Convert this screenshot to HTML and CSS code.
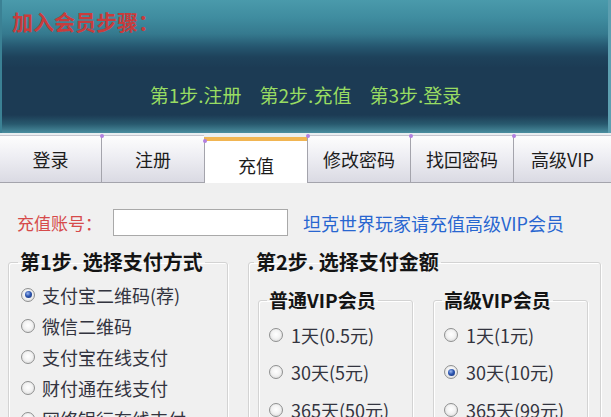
FILE: index.html
```html
<!DOCTYPE html>
<html lang="zh-CN">
<head>
<meta charset="utf-8">
<title>加入会员步骤</title>
<link rel="stylesheet" href="styles.css">
</head>
<body>
<div class="banner">
  <div class="title">加入会员步骤：</div>
  <div class="steps"><span>第1步.注册</span><span>第2步.充值</span><span>第3步.登录</span></div>
</div>
<div class="tabs">
  <div class="tab w1">登录</div>
  <div class="tab w2">注册</div>
  <div class="tab w3 active">充值</div>
  <div class="tab w4">修改密码</div>
  <div class="tab w5">找回密码</div>
  <div class="tab w6">高级VIP</div>
</div>
<div class="content">
  <div class="account">
    <span class="label">充值账号：</span>
    <span class="input"></span>
    <a class="link" href="#">坦克世界玩家请充值高级VIP会员</a>
  </div>
  <div class="groups">
    <fieldset class="box box-pay">
      <legend class="lg-pay">第1步. 选择支付方式</legend>
      <ul class="opts">
        <li><span class="radio on"><span class="dot"></span></span>支付宝二维码(荐)</li>
        <li><span class="radio"></span>微信二维码</li>
        <li><span class="radio"></span>支付宝在线支付</li>
        <li><span class="radio"></span>财付通在线支付</li>
        <li><span class="radio"></span>网络银行在线支付</li>
      </ul>
    </fieldset>
    <fieldset class="box box-amount">
      <legend class="lg-amount">第2步. 选择支付金额</legend>
      <div class="tiers">
        <fieldset class="box tier">
          <legend class="lg-tier">普通VIP会员</legend>
          <ul class="opts tier-opts">
            <li><span class="radio"></span>1天(0.5元)</li>
            <li><span class="radio"></span>30天(5元)</li>
            <li><span class="radio"></span>365天(50元)</li>
          </ul>
        </fieldset>
        <fieldset class="box tier">
          <legend class="lg-tier">高级VIP会员</legend>
          <ul class="opts tier-opts">
            <li><span class="radio"></span>1天(1元)</li>
            <li><span class="radio on"><span class="dot"></span></span>30天(10元)</li>
            <li><span class="radio"></span>365天(99元)</li>
          </ul>
        </fieldset>
      </div>
    </fieldset>
  </div>
</div>
</body>
</html>
```

FILE: styles.css
```css
html, body {
  margin: 0;
  padding: 0;
}
body {
  width: 611px;
  height: 417px;
  overflow: hidden;
  background: #f0f0f0;
  font-family: "Noto Sans CJK SC", "Noto Sans", sans-serif;
}

/* banner */
.banner {
  height: 133px;
  box-sizing: border-box;
  padding-top: 6px;
  background: linear-gradient(180deg,
    #4a9aab 0px, #3f8c9f 18px, #35798e 34px, #25566f 47px,
    #1e425b 57px, #1c3b54 68px, #1c3b54 115px, #28596e 124px, #4a8e9f 133px);
  box-shadow: inset -3px 0 0 #5d9fb0, inset 2px 0 0 #3b8194;
}
.title {
  padding-left: 12px;
  font-size: 21px;
  font-weight: 700;
  line-height: 30px;
  color: #c83c3c;
}
.steps {
  display: flex;
  justify-content: center;
  gap: 18px;
  margin-top: 47px;
  font-size: 19px;
  line-height: 24px;
  color: #98dc62;
}

/* tabs */
.tabs {
  display: flex;
  height: 50px;
  box-sizing: border-box;
  padding-top: 2px;
  background: #e9eef0;
}
.tab {
  position: relative;
  box-sizing: border-box;
  display: flex;
  align-items: center;
  justify-content: center;
  font-size: 18px;
  color: #1c1c1c;
  border-left: 1px solid #a4a4ac;
  border-bottom: 1px solid #a4a4ac;
  border-top: 1px solid #c6c6ce;
  background: linear-gradient(180deg, #fdfdfd 0%, #eeeef3 45%, #dadae3 100%);
}
.tab:first-child {
  border-left: none;
}
.tab::before {
  content: "";
  position: absolute;
  left: -2px;
  top: -2px;
  width: 4px;
  height: 4px;
  border-radius: 50%;
  background: #b27fe0;
}
.tab:first-child::before {
  display: none;
}
.w1 { width: 101px; }
.w2 { width: 103px; }
.w3 { width: 103px; }
.w4 { width: 103px; }
.w5 { width: 103px; }
.w6 { width: 98px; }
.tab.active {
  margin-top: 2px;
  padding-top: 6px;
  background: #ffffff;
  border-top: 4px solid #f1b552;
  border-bottom: none;
}

/* content */
.content {
  padding-top: 26px;
}
.account {
  display: flex;
  align-items: center;
  height: 27px;
}
.label {
  width: 113px;
  box-sizing: border-box;
  padding-left: 17px;
  font-size: 17px;
  color: #d64a4a;
  white-space: nowrap;
}
.input {
  width: 175px;
  height: 27px;
  box-sizing: border-box;
  border: 1px solid #a9a9a9;
  background: #ffffff;
}
.link {
  margin-left: 15px;
  font-size: 18px;
  color: #2866d0;
  text-decoration: none;
  white-space: nowrap;
}

.groups {
  display: flex;
  gap: 20px;
  margin-top: 13px;
  padding-left: 8px;
}
.box {
  margin: 0;
  padding: 0;
  min-width: 0;
  box-sizing: border-box;
  border: 1px solid #d3d3d3;
  border-radius: 3px;
  box-shadow: inset 1px 1px 0 #ffffff, 1px 1px 0 #ffffff;
}
.box legend {
  padding: 0 2px;
  font-size: 20px;
  font-weight: 700;
  line-height: 26px;
  color: #141414;
}
.box-pay {
  width: 220px;
  height: 200px;
  padding-left: 12px;
  padding-top: 4px;
}
.lg-pay { margin-left: -3px; }
.box-amount {
  width: 353px;
  height: 200px;
  padding-left: 9px;
}
.lg-amount { margin-left: -4px; }

.opts {
  list-style: none;
  margin: 0;
  padding: 0;
}
.opts li {
  display: flex;
  align-items: center;
  height: 31px;
  font-size: 18px;
  color: #33343f;
  white-space: nowrap;
}
.radio {
  width: 14px;
  height: 14px;
  margin-right: 7px;
  box-sizing: border-box;
  border-radius: 50%;
  border: 1px solid #8f9090;
  background: radial-gradient(circle at 50% 45%, #ffffff 0, #f3f3f3 45%, #d2d2d2 100%);
  display: flex;
  align-items: center;
  justify-content: center;
  flex-shrink: 0;
}
.dot {
  width: 7px;
  height: 7px;
  border-radius: 50%;
  background: radial-gradient(circle at 40% 35%, #9db9f0 0, #2d56b0 45%, #132e72 100%);
}

.tiers {
  display: flex;
  gap: 20px;
  margin-top: 12px;
}
.tier {
  width: 155px;
  height: 160px;
  padding-left: 10px;
  padding-top: 3px;
}
.lg-tier {
  margin-left: -2px;
}
.box .lg-tier {
  font-size: 19px;
}
.tier-opts li {
  height: 37.5px;
}
.tier-opts .radio {
  margin-right: 8px;
}
```
